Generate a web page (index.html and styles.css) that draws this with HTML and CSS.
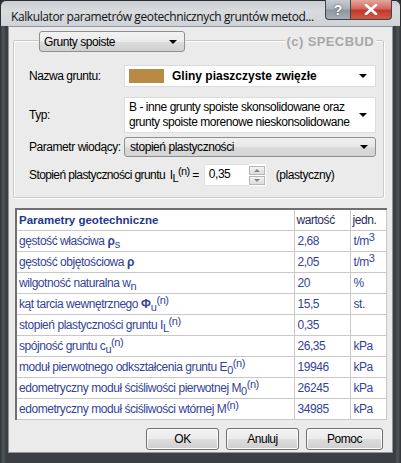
FILE: index.html
```html
<!DOCTYPE html>
<html>
<head>
<meta charset="utf-8">
<link rel="stylesheet" href="styles.css">
</head>
<body>
<div class="window">
  <div class="titlebar">
    <span class="title">Kalkulator parametrów geotechnicznych gruntów metod...</span>
    <div class="caption-btns">
      <div class="cbtn help">?</div>
      <div class="cbtn close"><svg width="14" height="11" viewBox="0 0 14 11"><path d="M2 1 L12 10 M12 1 L2 10" stroke="#fff" stroke-width="2.6" stroke-linecap="round"/></svg></div>
    </div>
  </div>
  <div class="client">
    <div class="group">
      <div class="group-head">
        <div class="combo combo-top"><span>Grunty spoiste</span><i class="arrow"></i></div>
        <span class="copyright">(c) SPECBUD</span>
      </div>
      <div class="row row-name">
        <span class="label">Nazwa gruntu:</span>
        <div class="field name-field"><span class="swatch"></span><b class="name-text">Gliny piaszczyste zwięzłe</b><i class="arrow"></i></div>
      </div>
      <div class="row row-type">
        <span class="label">Typ:</span>
        <div class="field type-field"><span class="type-text">B - inne grunty spoiste skonsolidowane oraz<br>grunty spoiste morenowe nieskonsolidowane</span><i class="arrow"></i></div>
      </div>
      <div class="row row-param">
        <span class="label">Parametr wiodący:</span>
        <div class="combo param-field"><span>stopień plastyczności</span><i class="arrow"></i></div>
      </div>
      <div class="row row-il">
        <span class="il-label">Stopień plastyczności gruntu <span class="il-sym">I<sub>L</sub><sup>(n)</sup> =</span></span>
        <div class="spin-input"><span>0,35</span></div>
        <div class="spin">
          <div class="spin-btn"><i class="up"></i></div>
          <div class="spin-btn"><i class="down"></i></div>
        </div>
        <span class="il-state">(plastyczny)</span>
      </div>
    </div>

    <table class="params">
      <thead>
        <tr><th class="c-name">Parametry geotechniczne</th><th class="c-val">wartość</th><th class="c-unit">jedn.</th></tr>
      </thead>
      <tbody>
        <tr><td>gęstość właściwa <span class="greek">ρ</span><sub>s</sub></td><td>2,68</td><td>t/m<sup>3</sup></td></tr>
        <tr><td>gęstość objętościowa <span class="greek">ρ</span></td><td>2,05</td><td>t/m<sup>3</sup></td></tr>
        <tr><td>wilgotność naturalna w<sub>n</sub></td><td>20</td><td>%</td></tr>
        <tr><td>kąt tarcia wewnętrznego <span class="greek">Φ</span><sub>u</sub><sup>(n)</sup></td><td>15,5</td><td>st.</td></tr>
        <tr><td>stopień plastyczności gruntu I<sub>L</sub><sup>(n)</sup></td><td>0,35</td><td></td></tr>
        <tr><td>spójność gruntu c<sub>u</sub><sup>(n)</sup></td><td>26,35</td><td>kPa</td></tr>
        <tr><td>moduł pierwotnego odkształcenia gruntu E<sub>0</sub><sup>(n)</sup></td><td>19946</td><td>kPa</td></tr>
        <tr><td>edometryczny moduł ściśliwości pierwotnej M<sub>0</sub><sup>(n)</sup></td><td>26245</td><td>kPa</td></tr>
        <tr><td>edometryczny moduł ściśliwości wtórnej M<sup>(n)</sup></td><td>34985</td><td>kPa</td></tr>
      </tbody>
    </table>

    <div class="buttons">
      <div class="btn btn-ok">OK</div>
      <div class="btn btn-cancel">Anuluj</div>
      <div class="btn btn-help">Pomoc</div>
    </div>
  </div>
</div>
</body>
</html>
```

FILE: styles.css
```css
* { box-sizing: border-box; }
html, body { margin: 0; padding: 0; }
body {
  width: 401px;
  height: 463px;
  overflow: hidden;
  background: #2a2d30;
  font-family: "Liberation Sans", Arial, sans-serif;
  font-size: 12px;
  letter-spacing: -0.45px;
  color: #000;
}
sup, sub { line-height: 0; }
.window {
  width: 401px;
  height: 463px;
  display: flex;
  flex-direction: column;
  background: linear-gradient(90deg, #2e3236 0, #50565b 3px, #3b3f43 6px, #3b3f43 calc(100% - 6px), #50565b calc(100% - 3px), #2e3236 100%);
  border-radius: 6px 6px 0 0;
  overflow: hidden;
}
.titlebar {
  height: 26px;
  flex: none;
  display: flex;
  align-items: flex-start;
  justify-content: space-between;
  padding-left: 10px;
  padding-right: 8px;
  background: linear-gradient(180deg, #c9ced3 0, #d9dcdf 40%, #cfd3d7 100%);
  border-radius: 6px 6px 0 0;
  border: 1px solid #2b2e31;
  border-bottom: none;
}
.title {
  font-family: "Open Sans", "Noto Sans", sans-serif;
  font-size: 12px;
  line-height: 14px;
  margin-top: 9px;
  color: #111;
  letter-spacing: -0.4px;
  white-space: nowrap;
}
.caption-btns {
  display: flex;
  margin-top: -1px;
}
.cbtn {
  height: 20px;
  border: 1px solid #3f4448;
  border-top: none;
  display: flex;
  align-items: center;
  justify-content: center;
  color: #fff;
  letter-spacing: 0;
}
.help {
  width: 25px;
  border-radius: 0 0 0 4px;
  background: linear-gradient(180deg, #c7ccd1 0, #a9b0b7 48%, #8d959d 52%, #a8aeb5 100%);
  font-weight: bold;
  font-size: 14px;
  text-shadow: 0 0 2px #333;
  border-right: none;
}
.close {
  width: 42px;
  border-radius: 0 0 4px 0;
  background: linear-gradient(180deg, #e3a79f 0, #d2685c 45%, #c0392c 55%, #d35a47 100%);
}
.client {
  flex: 1;
  margin: 0 8px 10px 8px;
  background: #ebebeb;
  border: 1px solid #8e979f;
  display: flex;
  flex-direction: column;
  padding: 0 8px 0 6px;
}
.group {
  margin-top: 13px;
  margin-left: -2px;
  border: 1px solid #c9c9c9;
  box-shadow: inset 1px 1px 0 #fff, 1px 1px 0 #fff;
  border-radius: 2px;
  padding: 0 7px 11px 15px;
  display: flex;
  flex-direction: column;
}
.group-head {
  margin-top: -10px;
  display: flex;
  justify-content: space-between;
  align-items: flex-start;
  padding-left: 10px;
  padding-right: 0;
}
.combo {
  display: flex;
  align-items: center;
  justify-content: space-between;
  border: 1px solid #8e8f8f;
  border-radius: 3px;
  background: linear-gradient(180deg, #f2f2f2 0, #ebebeb 50%, #dddddd 51%, #cfcfcf 100%);
  padding: 0 7px 0 4px;
  white-space: nowrap;
}
.combo-top {
  width: 146px;
  height: 21px;
}
.arrow {
  width: 0;
  height: 0;
  border-left: 4px solid transparent;
  border-right: 4px solid transparent;
  border-top: 4px solid #000;
  display: block;
  flex: none;
}
.copyright {
  margin-top: 3px;
  font-weight: bold;
  color: #a8a8a8;
  font-size: 13px;
  background: #ebebeb;
  padding: 0 2px;
  letter-spacing: 0.4px;
}
.row {
  display: flex;
  align-items: center;
}
.label {
  width: 95px;
  flex: none;
  white-space: nowrap;
}
.field {
  width: 252px;
  background: #fff;
  border: 1px solid #dcdcdc;
  display: flex;
  align-items: center;
  padding: 0 8px 0 4px;
}
.row-name { margin-top: 13px; }
.name-field { height: 22px; }
.swatch {
  width: 35px;
  height: 14px;
  background: #b98a45;
  margin-right: 8px;
  flex: none;
}
.name-text {
  flex: 1;
  font-size: 12px;
  letter-spacing: 0;
  white-space: nowrap;
}
.row-type { margin-top: 10px; }
.type-field {
  height: 36px;
  padding-left: 4px;
}
.type-text {
  flex: 1;
  line-height: 15px;
  white-space: nowrap;
}
.row-param { margin-top: 4px; }
.param-field {
  width: 252px;
  height: 20px;
  padding-left: 5px;
  background: linear-gradient(180deg, #f0f0f0 0, #e6e6e6 50%, #dadada 51%, #d4d4d4 100%);
}
.row-il { margin-top: 7px; height: 22px; }
.il-label { white-space: nowrap; letter-spacing: -0.6px; }
.il-sym { margin-left: 2px; }
.il-label sub, .params sub { font-size: 11px; vertical-align: -3px; }
.il-label sup, .params sup { font-size: 11px; vertical-align: 4px; }
.spin-input {
  margin-left: 5px;
  width: 45px;
  height: 22px;
  background: #fff;
  border: 1px solid #e1e1e1;
  border-right: none;
  padding: 2px 0 0 4px;
}
.spin {
  width: 17px;
  height: 22px;
  background: #fff;
  display: flex;
  flex-direction: column;
  justify-content: center;
  gap: 1px;
  padding: 1px 1px 1px 0;
}
.spin-btn {
  height: 9px;
  border: 1px solid #b7b7b7;
  background: linear-gradient(180deg, #f4f4f4, #dcdcdc);
  display: flex;
  align-items: center;
  justify-content: center;
}
.spin-btn i {
  width: 0;
  height: 0;
  border-left: 3px solid transparent;
  border-right: 3px solid transparent;
}
.spin-btn .up { border-bottom: 3px solid #7b8590; }
.spin-btn .down { border-top: 3px solid #7b8590; }
.il-state { margin-left: 10px; }

.params {
  margin-top: 10px;
  width: 370px;
  border-collapse: collapse;
  background: #fff;
  border-top: 2px solid #707070;
  border-left: 2px solid #707070;
  color: #33439a;
  table-layout: fixed;
}
.params tr { height: 21px; }
.params td, .params th {
  border: 1px solid #c8c8c8;
  padding: 0 0 0 2px;
  text-align: left;
  font-weight: normal;
  white-space: nowrap;
  line-height: 14px;
  overflow: hidden;
}
.params th.c-name {
  width: 278px;
  font-weight: bold;
  font-size: 11.5px;
  color: #22388a;
  letter-spacing: 0;
}
.params .c-val { width: 56px; color: #2a2a5a; }
.params .c-unit { width: 36px; color: #2a2a5a; }
.params td:nth-child(2), .params td:nth-child(3) { padding-left: 3px; }
.greek { font-weight: bold; font-size: 12px; letter-spacing: 0; }

.buttons {
  margin-top: 8px;
  display: flex;
  justify-content: flex-end;
  gap: 7px;
  padding-right: 1px;
}
.btn {
  width: 73px;
  height: 22px;
  border: 1px solid #707070;
  border-radius: 3px;
  background: linear-gradient(180deg, #f2f2f2 0, #ebebeb 50%, #dddddd 51%, #cfcfcf 100%);
  box-shadow: inset 0 0 0 1px #fcfcfc;
  display: flex;
  align-items: center;
  justify-content: center;
}
.btn-help { width: 77px; }
```
